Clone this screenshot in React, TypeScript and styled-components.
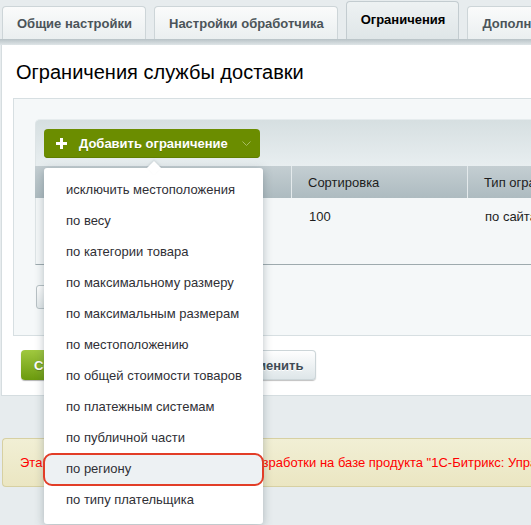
import styled, { createGlobalStyle } from "styled-components";

const GlobalStyle = createGlobalStyle`
  html, body {
    margin: 0;
    padding: 0;
    overflow: hidden;
    background: #e7ecee;
    font-family: "Liberation Sans", Arial, sans-serif;
  }
`;

const Page = styled.div`
  width: 680px;
  height: 525px;
  overflow: hidden;
  background: #e7ecee;
`;

const TabBar = styled.div`
  display: flex;
  align-items: flex-end;
  gap: 8px;
  padding-left: 2px;
  height: 39px;
`;

const Tab = styled.div<{ $active?: boolean }>`
  box-sizing: border-box;
  height: ${(p) => (p.$active ? "38px" : "33px")};
  padding: 0 13px 0 14px;
  display: flex;
  align-items: center;
  padding-bottom: ${(p) => (p.$active ? "3px" : "0")};
  border: 1px solid ${(p) => (p.$active ? "#c3ccd0" : "#cdd5d8")};
  border-bottom: none;
  border-radius: 4px 4px 0 0;
  background: ${(p) =>
    p.$active
      ? "linear-gradient(#eef2f3, #dfe6e8)"
      : "linear-gradient(#fafbfb, #eaeff0)"};
  color: ${(p) => (p.$active ? "#000" : "#4b5459")};
  font-size: 13px;
  font-weight: bold;
  white-space: nowrap;
`;

const TabLine = styled.div`
  height: 6px;
  background: linear-gradient(#b8c2c6, #dfe5e7);
`;

const Content = styled.div`
  margin-left: 1px;
  background: #fff;
  border-left: 1px solid #d6dde0;
  border-bottom: 1px solid #d5dde0;
  padding-bottom: 15px;
`;

const Title = styled.h1`
  margin: 0 0 14px;
  padding: 15px 0 0 14px;
  font-size: 20px;
  line-height: 24px;
  font-weight: normal;
  color: #000;
`;

const InnerPanel = styled.div`
  margin-left: 11px;
  background: #f5f8f9;
  border: 1px solid #d7dfe2;
  border-right: none;
  padding: 20px 0 0 21px;
`;

const Grid = styled.div`
  display: flex;
  flex-direction: column;
`;

const Toolbar = styled.div`
  height: 47px;
  box-sizing: border-box;
  padding: 9px 0 0 8px;
  border-radius: 5px 0 0 0;
  border-top: 1px solid #e6ecee;
  border-left: 1px solid #dde4e6;
  background: linear-gradient(#d6dfe1, #e8eef0);
`;

const AddWrap = styled.div`
  position: relative;
  display: inline-block;
`;

const AddButton = styled.div`
  height: 29px;
  width: 216px;
  box-sizing: border-box;
  display: flex;
  align-items: center;
  padding-left: 12px;
  gap: 12px;
  border-radius: 4px;
  background: #6b8d00;
  box-shadow: inset 0 -1px 0 #5f7e00;
  color: #fff;
  font-size: 13px;
  font-weight: bold;
  text-shadow: 0 1px 0 rgba(0, 0, 0, 0.15);
`;

const Chevron = styled.svg`
  margin-left: auto;
  margin-right: 9px;
`;

const Menu = styled.div`
  position: absolute;
  top: 39px;
  left: 0;
  width: 219px;
  z-index: 10;
  background: #fff;
  border-radius: 3px;
  box-shadow: 0 2px 10px rgba(60, 80, 90, 0.35);
  padding: 7px 0 8px;

  &::before {
    content: "";
    position: absolute;
    top: -5px;
    left: 105px;
    width: 10px;
    height: 10px;
    background: #fff;
    transform: rotate(45deg);
    box-shadow: -1px -1px 2px rgba(60, 80, 90, 0.12);
  }
`;

const MenuItem = styled.div<{ $marked?: boolean }>`
  position: relative;
  height: 31px;
  line-height: 30px;
  padding-left: 22px;
  font-size: 13px;
  color: #2f2f35;
  white-space: nowrap;
  background: ${(p) => (p.$marked ? "#edf1f3" : "transparent")};
  border-radius: ${(p) => (p.$marked ? "8px" : "0")};
  outline: ${(p) => (p.$marked ? "2px solid #e23d27" : "none")};
  outline-offset: -1px;
`;

const HeaderRow = styled.div`
  display: grid;
  grid-template-columns: 256px 176px 220px;
  height: 32px;
  background: linear-gradient(#c4ced2, #adbbc0);
`;

const HeadCell = styled.div<{ $first?: boolean }>`
  box-sizing: border-box;
  padding-left: 16px;
  display: flex;
  align-items: center;
  font-size: 13px;
  color: #1d1d1d;
  border-left: ${(p) => (p.$first ? "none" : "1px solid #e4eaec")};
  white-space: nowrap;
`;

const DataRow = styled.div`
  display: grid;
  grid-template-columns: 256px 176px 220px;
  height: 67px;
  box-sizing: border-box;
  background: #f4f7f8;
  border-left: 1px solid #dde4e6;
  border-bottom: 1px solid #9eaaae;
`;

const DataCell = styled.div<{ $first?: boolean }>`
  padding: 10px 0 0 ${(p) => (p.$first ? "0" : "17px")};
  font-size: 13px;
  line-height: 17px;
  color: #1d1d1d;
  white-space: nowrap;
`;

const GridFooter = styled.div`
  height: 70px;
  box-sizing: border-box;
  padding: 20px 0 0 1px;
`;

const SmallButton = styled.div`
  width: 110px;
  height: 24px;
  box-sizing: border-box;
  border: 1px solid #b7c1c5;
  border-radius: 3px;
  background: linear-gradient(#fff, #e2e8ea);
`;

const Actions = styled.div`
  display: flex;
  gap: 6px;
  margin-top: 14px;
  padding-left: 19px;
`;

const ActionButton = styled.div<{ $primary?: boolean }>`
  height: 30px;
  box-sizing: border-box;
  padding: 0 13px;
  display: flex;
  align-items: center;
  border-radius: 4px;
  font-size: 13px;
  font-weight: bold;
  color: ${(p) => (p.$primary ? "#fff" : "#3f4b54")};
  background: ${(p) =>
    p.$primary
      ? "linear-gradient(#a0c83f, #6b9a0e)"
      : "linear-gradient(#ffffff, #dde5e8)"};
  box-shadow: ${(p) =>
    p.$primary
      ? "0 1px 1px rgba(0,0,0,0.3)"
      : "0 1px 1px rgba(0,0,0,0.25), inset 0 0 0 1px #ccd5d8"};
  text-shadow: ${(p) =>
    p.$primary ? "0 1px rgba(0,0,0,0.2)" : "0 1px #fff"};
`;

const Notice = styled.div`
  margin: 42px 0 0 2px;
  height: 49px;
  box-sizing: border-box;
  padding-left: 17px;
  display: flex;
  align-items: center;
  border: 1px solid #d7d0a2;
  border-right: none;
  border-radius: 4px 0 0 4px;
  background: linear-gradient(#f1efd5, #ebe6c2);
  color: #f00;
  font-size: 13px;
  white-space: nowrap;
`;

const menuItems = [
  "исключить местоположения",
  "по весу",
  "по категории товара",
  "по максимальному размеру",
  "по максимальным размерам",
  "по местоположению",
  "по общей стоимости товаров",
  "по платежным системам",
  "по публичной части",
  "по региону",
  "по типу плательщика",
];

const App = () => {
  return (
    <Page>
      <GlobalStyle />
      <TabBar>
        <Tab>Общие настройки</Tab>
        <Tab>Настройки обработчика</Tab>
        <Tab $active>Ограничения</Tab>
        <Tab>Дополнительно</Tab>
      </TabBar>
      <TabLine />
      <Content>
        <Title>Ограничения службы доставки</Title>
        <InnerPanel>
          <Grid>
            <Toolbar>
              <AddWrap>
                <AddButton>
                  <svg width="11" height="11" viewBox="0 0 11 11">
                    <rect x="4" y="0" width="3" height="11" fill="#fff" />
                    <rect x="0" y="4" width="11" height="3" fill="#fff" />
                  </svg>
                  Добавить ограничение
                  <Chevron width="9" height="6" viewBox="0 0 9 6">
                    <polyline
                      points="0.5,0.5 4.5,4.5 8.5,0.5"
                      fill="none"
                      stroke="#a7bd62"
                      strokeWidth="1"
                    />
                  </Chevron>
                </AddButton>
                <Menu>
                  {menuItems.map((item) => (
                    <MenuItem key={item} $marked={item === "по региону"}>
                      {item}
                    </MenuItem>
                  ))}
                </Menu>
              </AddWrap>
            </Toolbar>
            <HeaderRow>
              <HeadCell $first>Название</HeadCell>
              <HeadCell>Сортировка</HeadCell>
              <HeadCell>Тип ограничения</HeadCell>
            </HeaderRow>
            <DataRow>
              <DataCell $first />
              <DataCell>100</DataCell>
              <DataCell>по сайтам</DataCell>
            </DataRow>
            <GridFooter>
              <SmallButton />
            </GridFooter>
          </Grid>
        </InnerPanel>
        <Actions>
          <ActionButton $primary>Сохранить</ActionButton>
          <ActionButton>Применить</ActionButton>
          <ActionButton>Отменить</ActionButton>
        </Actions>
      </Content>
      <Notice>
        Эта версия предназначена лишь для разработки на базе продукта
        "1С-Битрикс: Управление сайтом"
      </Notice>
    </Page>
  );
};

export default App;
